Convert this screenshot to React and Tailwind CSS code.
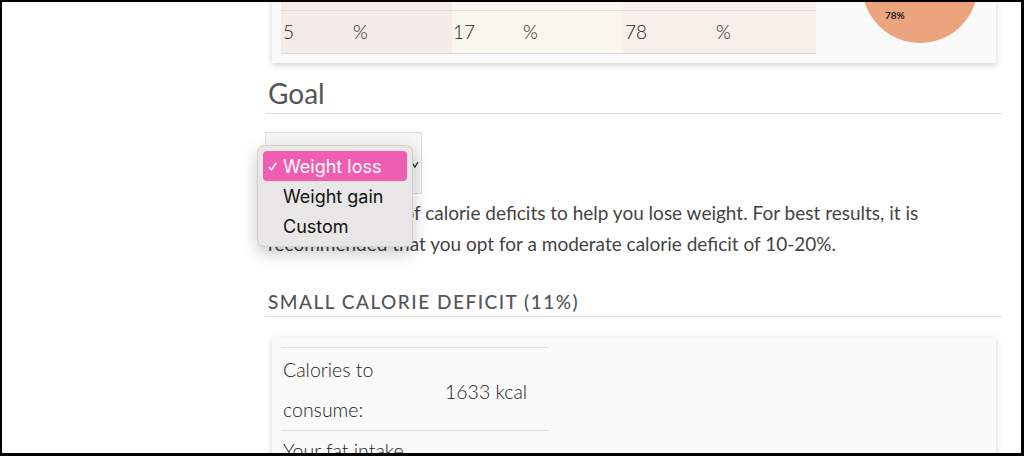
const pie = () => {
  // pie: 5% / 17% / 78%, starting at top, clockwise
  const cx = 60, cy = 60, r = 58;
  const pt = (f) => {
    const a = -Math.PI / 2 + f * 2 * Math.PI;
    return [cx + r * Math.cos(a), cy + r * Math.sin(a)];
  };
  const slice = (a, b) => {
    const [x1, y1] = pt(a);
    const [x2, y2] = pt(b);
    const large = b - a > 0.5 ? 1 : 0;
    return `M${cx} ${cy} L${x1} ${y1} A${r} ${r} 0 ${large} 1 ${x2} ${y2} Z`;
  };
  return (
    <svg width="120" height="120" viewBox="0 0 120 120">
      <path d={slice(0, 0.05)} fill="#e58f8f" />
      <path d={slice(0.05, 0.22)} fill="#f1d67e" />
      <path d={slice(0.22, 1)} fill="#eba47b" />
      <text x="25" y="94" fontSize="10" fontWeight="700" fill="#1a1a1a" fontFamily="Lato, sans-serif">78%</text>
    </svg>
  );
};

const MacroRow = () => (
  <div className="flex h-[43px] border-b border-[#dddddd] text-[19px] font-light text-[#222]">
    <div className="w-[171px] bg-[#f5ebe8] flex items-center">
      <span className="w-[72px] pl-[2px]">5</span>
      <span>%</span>
    </div>
    <div className="w-[170px] bg-[#f9f6ec] flex items-center">
      <span className="w-[71px] pl-[1px]">17</span>
      <span>%</span>
    </div>
    <div className="w-[194px] bg-[#f8efea] flex items-center">
      <span className="w-[94px] pl-[3px]">78</span>
      <span>%</span>
    </div>
  </div>
);

export default function App() {
  return (
    <div className="w-[1024px] h-[456px] overflow-hidden bg-white border-black border-t-2 border-l-2 border-r-[3px] border-b-[3px] font-['Lato',sans-serif]">
      <div className="ml-[263px] w-[737px]">
        {/* macro card, scrolled mostly out of view */}
        <div className="-mt-[80px] ml-[7px] w-[724px] bg-[#fafafa] shadow-[0_2px_6px_rgba(0,0,0,0.18)] flex pb-[9px]">
          <div className="ml-[9px] w-[535px]">
            <div className="flex h-[89px] border-b border-[#dddddd]">
              <div className="w-[171px] bg-[#f5ebe8]" />
              <div className="w-[170px] bg-[#f9f6ec]" />
              <div className="w-[194px] bg-[#f8efea]" />
            </div>
            <MacroRow />
          </div>
          <div className="ml-[44px] mt-[3px]">{pie()}</div>
        </div>

        <h2 className="mt-[13px] text-[28px] leading-[34px] pb-[3px] pl-[3px] border-b border-[#dddddd] text-[#555]">
          Goal
        </h2>

        <div className="relative mt-[18px] w-[157px] h-[62px] bg-[#f5f5f5] border border-[#dddddd]">
          <svg className="absolute left-[145px] top-[28px]" width="8" height="8" viewBox="0 0 8 8">
            <path d="M1 2 L4 6 L7 1" fill="none" stroke="#333" strokeWidth="1.4" />
          </svg>
          <div className="absolute left-[-9px] top-[12px] w-[156px] rounded-[7px] bg-[#e9e7e5] border border-[#d2d0ce] shadow-[0_6px_16px_rgba(0,0,0,0.22)] p-[5px] font-['Inter',sans-serif] text-[18px] text-[#111]">
            <div className="flex items-center h-[30px] rounded-[4px] bg-[#f05eb2] text-white">
              <svg className="ml-[5px] mr-[6px]" width="9" height="9" viewBox="0 0 9 9">
                <path d="M1 5 L3.5 8 L8 1" fill="none" stroke="#fff" strokeWidth="1.4" />
              </svg>
              <span>Weight loss</span>
            </div>
            <div className="flex items-center h-[30px] pl-[20px]">Weight gain</div>
            <div className="flex items-center h-[30px] pl-[20px]">Custom</div>
          </div>
        </div>

        <p className="mt-[3px] pl-[3px] text-[19px] leading-[31px] text-[#444]">
          There are levels of calorie deficits to help you lose weight. For best results, it is
          recommended that you opt for a moderate calorie deficit of 10-20%.
        </p>

        <h3 className="mt-[32px] pl-[3px] pb-[3px] text-[19px] leading-[22px] tracking-[1.5px] uppercase font-medium text-[#555] border-b border-[#dddddd]">
          Small calorie deficit (11%)
        </h3>

        <div className="mt-[20px] ml-[7px] w-[724px] h-[200px] bg-[#fafafa] shadow-[0_2px_6px_rgba(0,0,0,0.18)] pt-[10px]">
          <div className="ml-[9px] w-[268px] border-t border-[#dddddd] text-[19.5px] font-light text-[#222]">
            <div className="flex h-[83px] border-b border-[#dddddd]">
              <div className="w-[162px] pl-[2px] pt-[2px] leading-[40px]">
                Calories to
                <br />
                consume:
              </div>
              <div className="flex items-center pl-[2px] pt-[5px]">1633 kcal</div>
            </div>
            <div className="flex h-[83px] border-b border-[#dddddd]">
              <div className="w-[162px] pl-[2px] pt-[0px] leading-[40px]">
                Your fat intake
                <br />
                should be:
              </div>
            </div>
          </div>
        </div>
      </div>
    </div>
  );
}
